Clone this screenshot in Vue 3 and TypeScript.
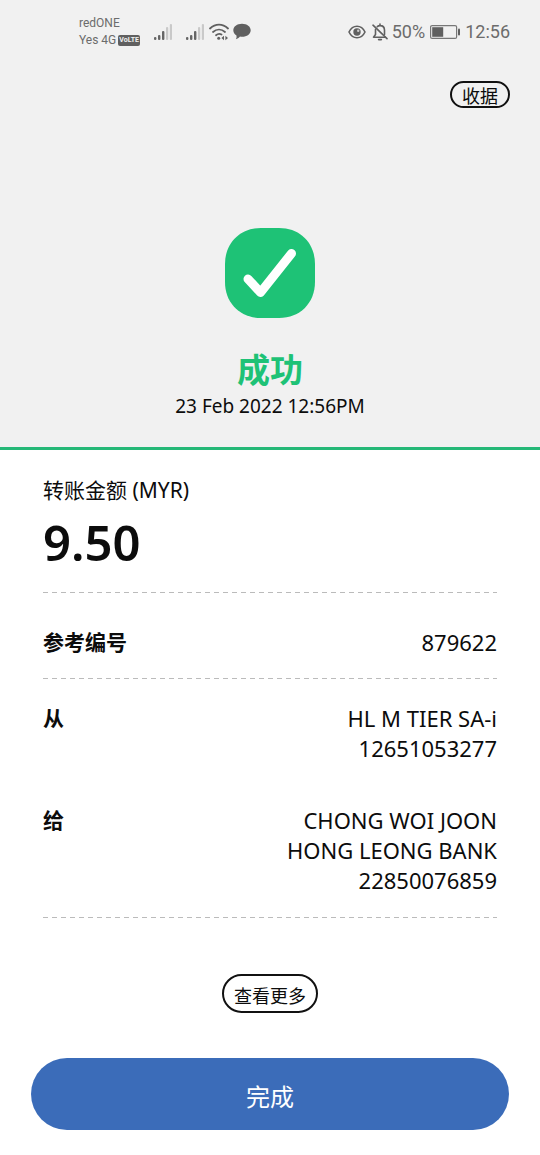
<script setup lang="ts">
interface Party {
  label: string
  lines: string[]
}

const reference = '879622'
const parties: Party[] = [
  { label: '从', lines: ['HL M TIER SA-i', '12651053277'] },
  { label: '给', lines: ['CHONG WOI JOON', 'HONG LEONG BANK', '22850076859'] },
]
</script>

<template>
  <div class="screen">
    <header class="top">
      <div class="status">
        <div class="carriers">
          <span>redONE</span>
          <span class="carrier">Yes 4G <span class="volte">VoLTE</span></span>
        </div>
        <svg v-for="n in 2" :key="n" class="signal" width="18" height="18" viewBox="0 0 18 18" aria-hidden="true">
          <g fill="#666">
            <rect x="0" y="14" width="2.4" height="3" rx="1" />
            <rect x="4" y="12" width="2.4" height="5" rx="1" />
            <rect x="8" y="8" width="2.4" height="9" rx="1" />
          </g>
          <g fill="#c9c9c9">
            <rect x="12" y="4" width="2.2" height="13" rx="1" />
            <rect x="15.8" y="1" width="2.2" height="16" rx="1" />
          </g>
        </svg>
        <svg class="wifi" width="20" height="18" viewBox="0 0 20 18" aria-hidden="true">
          <g fill="none" stroke="#606060" stroke-width="1.8" stroke-linecap="round">
            <path d="M1 5.5C6.5 .3 13.5 .3 19 5.5" />
            <path d="M4 9c3.6-3.3 8.4-3.3 12 0" />
            <path d="M7 12.2c1.8-1.5 3.8-1.7 5.5-.6" />
          </g>
          <circle cx="9.7" cy="15.2" r="1.5" fill="#606060" />
          <path d="M15 12.8v4.4l-2.6-2.2zM16.4 12.8v4.4l2.6-2.2z" fill="#606060" />
        </svg>
        <svg width="18" height="17" viewBox="0 0 18 17" aria-hidden="true">
          <path d="M9 .7c5 0 8.700 2.800 8.700 6.600S14 13.800 9 13.800c-.7 0-1.400 0-2-.2-1.200 1.500-2.700 2.500-4.100 2.600.7-1.100.9-2.300.6-3.600C1.500 11.400.300 9.500.300 7.300.300 3.500 4 .7 9 .7z" fill="#606060" />
        </svg>
        <svg class="eye" width="18" height="16" viewBox="0 0 18 16" aria-hidden="true">
          <path d="M1 8C4.700 .300 13.300 .300 17 8 13.300 15.700 4.700 15.700 1 8z" fill="none" stroke="#606060" stroke-width="1.600" />
          <circle cx="9" cy="8" r="3.700" fill="#606060" />
          <circle cx="10.200" cy="6.800" r="1.200" fill="#ccc" />
        </svg>
        <svg class="bell" width="16" height="18" viewBox="0 0 16 18" aria-hidden="true">
          <g fill="none" stroke="#606060" stroke-width="1.600" stroke-linecap="round" stroke-linejoin="round">
            <path d="M5.300 3.600C6 2.900 7 2.600 8 2.600c2.600 0 4.500 1.800 4.500 4.600v4.300M3.500 6.300v5.200L1.500 14.200h11.800M8 2.500V1M6.600 16.600h2.800" />
            <path d="M1 2.200l14 13.500" />
          </g>
        </svg>
        <span class="reading">50%</span>
        <svg class="battery" width="30" height="16" viewBox="0 0 30 16" aria-hidden="true">
          <rect x=".6" y="1.600" width="26" height="12.800" rx="1.500" fill="none" stroke="#777" stroke-width="1.200" />
          <rect x="2.200" y="3.200" width="11" height="9.600" fill="#606060" />
          <rect x="28" y="4.500" width="2" height="7" rx="1" fill="#606060" />
        </svg>
        <time class="reading">12:56</time>
      </div>

      <button class="receipt" type="button">收据</button>

      <svg class="badge" width="90" height="90" viewBox="0 0 90 90" aria-hidden="true">
        <path d="M36 0H54C76 0 90 16 90 36V54C90 75 75 90 54 90H36C15 90 0 75 0 54V36C0 15 15 0 36 0Z" fill="#1ec276" />
        <path d="M23 51l12.500 13.500L66.500 25.500" fill="none" stroke="#fff" stroke-width="9" stroke-linecap="round" stroke-linejoin="round" />
      </svg>
      <h1>成功</h1>
      <time class="date">23 Feb 2022 12:56PM</time>
    </header>

    <main>
      <section class="amount">
        <h2>转账金额 (MYR)</h2>
        <p>9.50</p>
      </section>
      <dl class="row">
        <dt>参考编号</dt>
        <dd>{{ reference }}</dd>
      </dl>
      <dl class="parties">
        <div v-for="party in parties" :key="party.label" class="party">
          <dt>{{ party.label }}</dt>
          <dd>
            <span v-for="line in party.lines" :key="line">{{ line }}</span>
          </dd>
        </div>
      </dl>
      <button class="more" type="button">查看更多</button>
    </main>

    <footer>
      <button class="done" type="button">完成</button>
    </footer>
  </div>
</template>

<style>
body {
  margin: 0;
  background: #fff;
}
</style>

<style scoped>
.screen {
  min-height: 100vh;
  display: flex;
  flex-direction: column;
  background: #fff;
  color: #0c0c0c;
  font-family: "Noto Sans", "Noto Sans CJK SC", sans-serif;
  font-size: 21px;
  line-height: 30px;
}

h1,
h2,
p,
dl,
dd {
  margin: 0;
}

button {
  font-family: inherit;
  cursor: pointer;
}

.top {
  display: flex;
  flex-direction: column;
  align-items: center;
  padding-bottom: 28px;
  background: #f1f1f1;
  border-bottom: 3px solid #25b877;
}

.status {
  align-self: stretch;
  display: flex;
  align-items: center;
  box-sizing: border-box;
  height: 62px;
  padding: 1px 30px 0 79px;
  color: #6c6c6c;
  font-family: Roboto, sans-serif;
}

.carriers {
  display: flex;
  flex-direction: column;
  width: 75px;
  font-size: 12px;
  line-height: 17px;
}

.carrier {
  display: flex;
  align-items: center;
  gap: 2px;
  white-space: nowrap;
}

.volte {
  padding: 0 1px;
  border-radius: 2px;
  background: #606060;
  color: #f1f1f1;
  font-size: 7px;
  font-weight: 700;
  line-height: 11px;
}

.signal {
  margin-right: 14px;
}

.wifi {
  margin: 0 4px 0 -9px;
}

.eye {
  margin-left: auto;
}

.bell {
  margin: 0 4px 0 6px;
}

.reading {
  font-size: 18px;
}

.battery {
  margin: 0 5px;
}

.receipt {
  align-self: flex-end;
  margin: 19px 30px 0 0;
  padding: 4px 10px 0;
  border: 2px solid #111;
  border-radius: 14px;
  background: transparent;
  color: #0c0c0c;
  font-size: 18px;
  line-height: 19px;
}

.badge {
  margin-top: 120px;
}

h1 {
  margin-top: 28px;
  color: #1ec276;
  font-size: 33px;
  font-weight: 700;
  line-height: 47px;
}

.date {
  font-size: 19px;
  line-height: 26px;
}

main {
  display: flex;
  flex-direction: column;
  padding: 0 43px;
}

.amount,
.row,
.parties {
  background: repeating-linear-gradient(90deg, #bbb 0 5px, transparent 5px 9px) bottom / 100% 1px no-repeat;
}

.amount {
  padding: 25px 0 20px;
}

h2 {
  font-size: 21px;
  font-weight: 400;
}

.amount p {
  padding-top: 6px;
  font-size: 49px;
  font-weight: 600;
  line-height: 62px;
}

.row,
.party {
  display: flex;
  justify-content: space-between;
}

.row {
  padding: 34px 0 22px;
}

dt {
  font-weight: 700;
}

dd {
  font-size: 22px;
  text-align: right;
}

dd span {
  display: block;
}

.parties {
  display: flex;
  flex-direction: column;
  gap: 42px;
  padding: 24px 0 23px;
}

.more {
  align-self: center;
  margin-top: 56px;
  padding: 5px 10px 0;
  border: 2px solid #111;
  border-radius: 20px;
  background: #fff;
  color: #0c0c0c;
  font-size: 18px;
  line-height: 30px;
}

footer {
  padding: 45px 31px 24px;
}

.done {
  width: 100%;
  padding: 6px 0 0;
  border: 0;
  border-radius: 36px;
  background: #3b6cb9;
  color: #fff;
  font-size: 24px;
  line-height: 66px;
}
</style>
